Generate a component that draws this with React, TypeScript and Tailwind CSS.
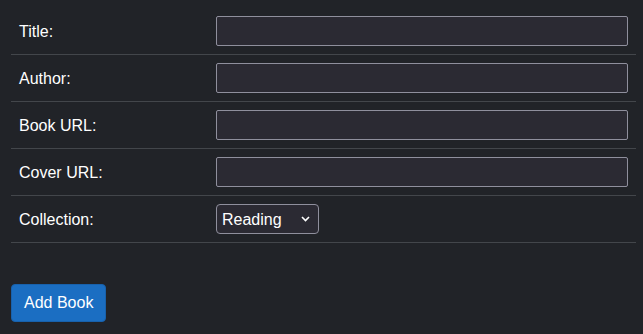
import { useState } from "react";

const fields = [
  { id: "title", label: "Title:" },
  { id: "author", label: "Author:" },
  { id: "bookUrl", label: "Book URL:" },
  { id: "coverUrl", label: "Cover URL:" },
];

export default function App() {
  const [collection, setCollection] = useState("Reading");

  return (
    <div className="min-h-[334px] bg-[#212328] px-[11px] pt-2 font-['Liberation_Sans',Arial,sans-serif] text-[16px] text-white">
      <table className="w-[625px] border-collapse">
        <tbody>
          {fields.map((f) => (
            <tr key={f.id} className="border-b border-[#43464b]">
              <td className="w-[197px] px-2 pt-[9px] pb-[7px] align-middle">{f.label}</td>
              <td className="p-2">
                <input
                  id={f.id}
                  className="block h-[30px] w-full rounded-[2px] border border-[#8f8f9d] bg-[#2b2a33] px-1 text-white outline-none"
                />
              </td>
            </tr>
          ))}
          <tr className="border-b border-[#43464b]">
            <td className="px-2 pt-[9px] pb-[7px]">Collection:</td>
            <td className="p-2">
              <div className="relative w-[103px]">
                <select
                  value={collection}
                  onChange={(e) => setCollection(e.target.value)}
                  className="block h-[30px] w-full appearance-none rounded-[4px] border border-[#8f8f9d] bg-[#2b2a33] pt-[2px] pl-[5px] text-white outline-none"
                >
                  <option>Reading</option>
                  <option>Read</option>
                  <option>Want to Read</option>
                </select>
                <svg
                  className="pointer-events-none absolute right-[9px] top-[12px]"
                  width="9"
                  height="6"
                  viewBox="0 0 9 6"
                  fill="none"
                >
                  <path d="M1 1l3.5 3.5L8 1" stroke="white" strokeWidth="1.6" />
                </svg>
              </div>
            </td>
          </tr>
        </tbody>
      </table>
      <button className="mt-[41px] rounded-[4px] border border-[#1861ac] bg-[#1b6ec2] px-3 py-[6px] leading-6 text-white">
        Add Book
      </button>
    </div>
  );
}
